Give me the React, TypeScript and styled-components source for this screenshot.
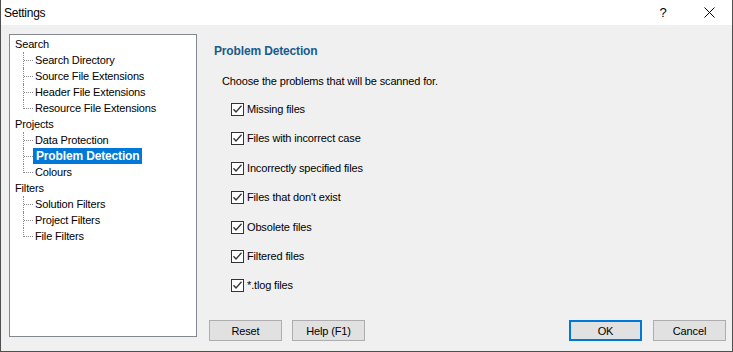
import styled, { createGlobalStyle, css } from "styled-components";

const GlobalStyle = createGlobalStyle`
    html, body {
        margin: 0;
        padding: 0;
        background: #f0f0f0;
    }
    body {
        font-family: "Liberation Sans", Arial, sans-serif;
        font-size: 11px;
        letter-spacing: -0.15px;
        color: #000;
    }
`;

const Window = styled.div`
    width: 733px;
    height: 352px;
    box-sizing: border-box;
    border: 1px solid #4f4f4f;
    border-top: none;
    background: #f0f0f0;
    display: flex;
    flex-direction: column;
`;

const TitleBar = styled.div`
    height: 25px;
    flex-shrink: 0;
    background: #fff;
    display: flex;
    align-items: center;
    padding-left: 3px;
`;

const Title = styled.span`
    flex: 1;
    font-size: 12px;
    letter-spacing: -0.25px;
    padding-top: 1px;
`;

const TitleButton = styled.div`
    width: 46px;
    height: 25px;
    display: flex;
    align-items: center;
    justify-content: center;
    font-size: 13px;
`;

const Body = styled.div`
    flex: 1;
    display: flex;
    gap: 12px;
    padding: 9px 6px 10px 8px;
    min-height: 0;
`;

const Tree = styled.div`
    width: 188px;
    flex-shrink: 0;
    box-sizing: border-box;
    margin-bottom: 4px;
    background: #fff;
    border: 1px solid #828790;
    padding-top: 1px;
`;

const ParentRow = styled.div`
    height: 16px;
    line-height: 16px;
    display: flex;
    padding-left: 3px;
`;

const ChildRow = styled.div`
    height: 16px;
    line-height: 16px;
    display: flex;
`;

const Branch = styled.span<{ $last: boolean }>`
    position: relative;
    width: 23px;
    flex-shrink: 0;

    &::before {
        content: "";
        position: absolute;
        left: 13px;
        top: 0;
        height: ${(p) => (p.$last ? "9px" : "16px")};
        border-left: 1px dotted #8a8a8a;
    }

    &::after {
        content: "";
        position: absolute;
        left: 14px;
        top: 8px;
        width: 9px;
        border-top: 1px dotted #8a8a8a;
    }
`;

const NodeLabel = styled.span<{ $selected?: boolean }>`
    padding: 0 2px;
    white-space: nowrap;
    ${(p) =>
        p.$selected &&
        css`
            padding: 0 3px;
            background: #0078d7;
            color: #fff;
            font-weight: bold;
            font-size: 12px;
        `}
`;

const RightColumn = styled.div`
    flex: 1;
    display: flex;
    flex-direction: column;
`;

const Content = styled.div`
    flex: 1;
`;

const Heading = styled.div`
    margin-top: 9px;
    padding-left: 5px;
    line-height: 16px;
    font-size: 12px;
    font-weight: bold;
    color: #1a5b8e;
`;

const Intro = styled.div`
    margin-top: 14px;
    padding-left: 13px;
    line-height: 16px;
`;

const CheckList = styled.div`
    margin-top: 14px;
    padding-left: 22px;
    display: flex;
    flex-direction: column;
    gap: 16.4px;
`;

const CheckRow = styled.label`
    display: flex;
    align-items: center;
    height: 13px;
    line-height: 13px;
    gap: 3px;
`;

const Box = styled.span`
    width: 13px;
    height: 13px;
    box-sizing: border-box;
    border: 1px solid #333;
    background: #fff;
    display: flex;
    align-items: center;
    justify-content: center;
    flex-shrink: 0;
`;

const ButtonRow = styled.div`
    display: flex;
    height: 21px;
    gap: 10px;
`;

const Spacer = styled.div`
    flex: 1;
`;

const Button = styled.div<{ $default?: boolean }>`
    width: 73px;
    height: 21px;
    box-sizing: border-box;
    background: #e1e1e1;
    border: 1px solid #adadad;
    display: flex;
    align-items: center;
    justify-content: center;
    ${(p) =>
        p.$default &&
        css`
            border-color: #0078d7;
            box-shadow: inset 0 0 0 1px #0078d7;
            margin-right: 1px;
        `}
`;

const tree = [
    {
        label: "Search",
        children: ["Search Directory", "Source File Extensions", "Header File Extensions", "Resource File Extensions"],
    },
    { label: "Projects", children: ["Data Protection", "Problem Detection", "Colours"] },
    { label: "Filters", children: ["Solution Filters", "Project Filters", "File Filters"] },
];

const problems = [
    "Missing files",
    "Files with incorrect case",
    "Incorrectly specified files",
    "Files that don't exist",
    "Obsolete files",
    "Filtered files",
    "*.tlog files",
];

const selected = "Problem Detection";

const CheckMark = () => (
    <svg width="11" height="11" viewBox="0 0 11 11">
        <polyline points="1.5,5.2 4,8 9.5,1.8" fill="none" stroke="#333" strokeWidth="1.3" />
    </svg>
);

const App = () => {
    return (
        <Window>
            <GlobalStyle />
            <TitleBar>
                <Title>Settings</Title>
                <TitleButton>?</TitleButton>
                <TitleButton>
                    <svg width="11" height="11" viewBox="0 0 11 11">
                        <path d="M0.5 0.5 L10.5 10.5 M10.5 0.5 L0.5 10.5" stroke="#000" strokeWidth="1" />
                    </svg>
                </TitleButton>
            </TitleBar>
            <Body>
                <Tree>
                    {tree.map((group) => (
                        <div key={group.label}>
                            <ParentRow>
                                <NodeLabel>{group.label}</NodeLabel>
                            </ParentRow>
                            {group.children.map((child, i) => (
                                <ChildRow key={child}>
                                    <Branch $last={i === group.children.length - 1} />
                                    <NodeLabel $selected={child === selected}>{child}</NodeLabel>
                                </ChildRow>
                            ))}
                        </div>
                    ))}
                </Tree>
                <RightColumn>
                    <Content>
                        <Heading>Problem Detection</Heading>
                        <Intro>Choose the problems that will be scanned for.</Intro>
                        <CheckList>
                            {problems.map((p) => (
                                <CheckRow key={p}>
                                    <Box>
                                        <CheckMark />
                                    </Box>
                                    {p}
                                </CheckRow>
                            ))}
                        </CheckList>
                    </Content>
                    <ButtonRow>
                        <Button>Reset</Button>
                        <Button>Help (F1)</Button>
                        <Spacer />
                        <Button $default>OK</Button>
                        <Button>Cancel</Button>
                    </ButtonRow>
                </RightColumn>
            </Body>
        </Window>
    );
};

export default App;
